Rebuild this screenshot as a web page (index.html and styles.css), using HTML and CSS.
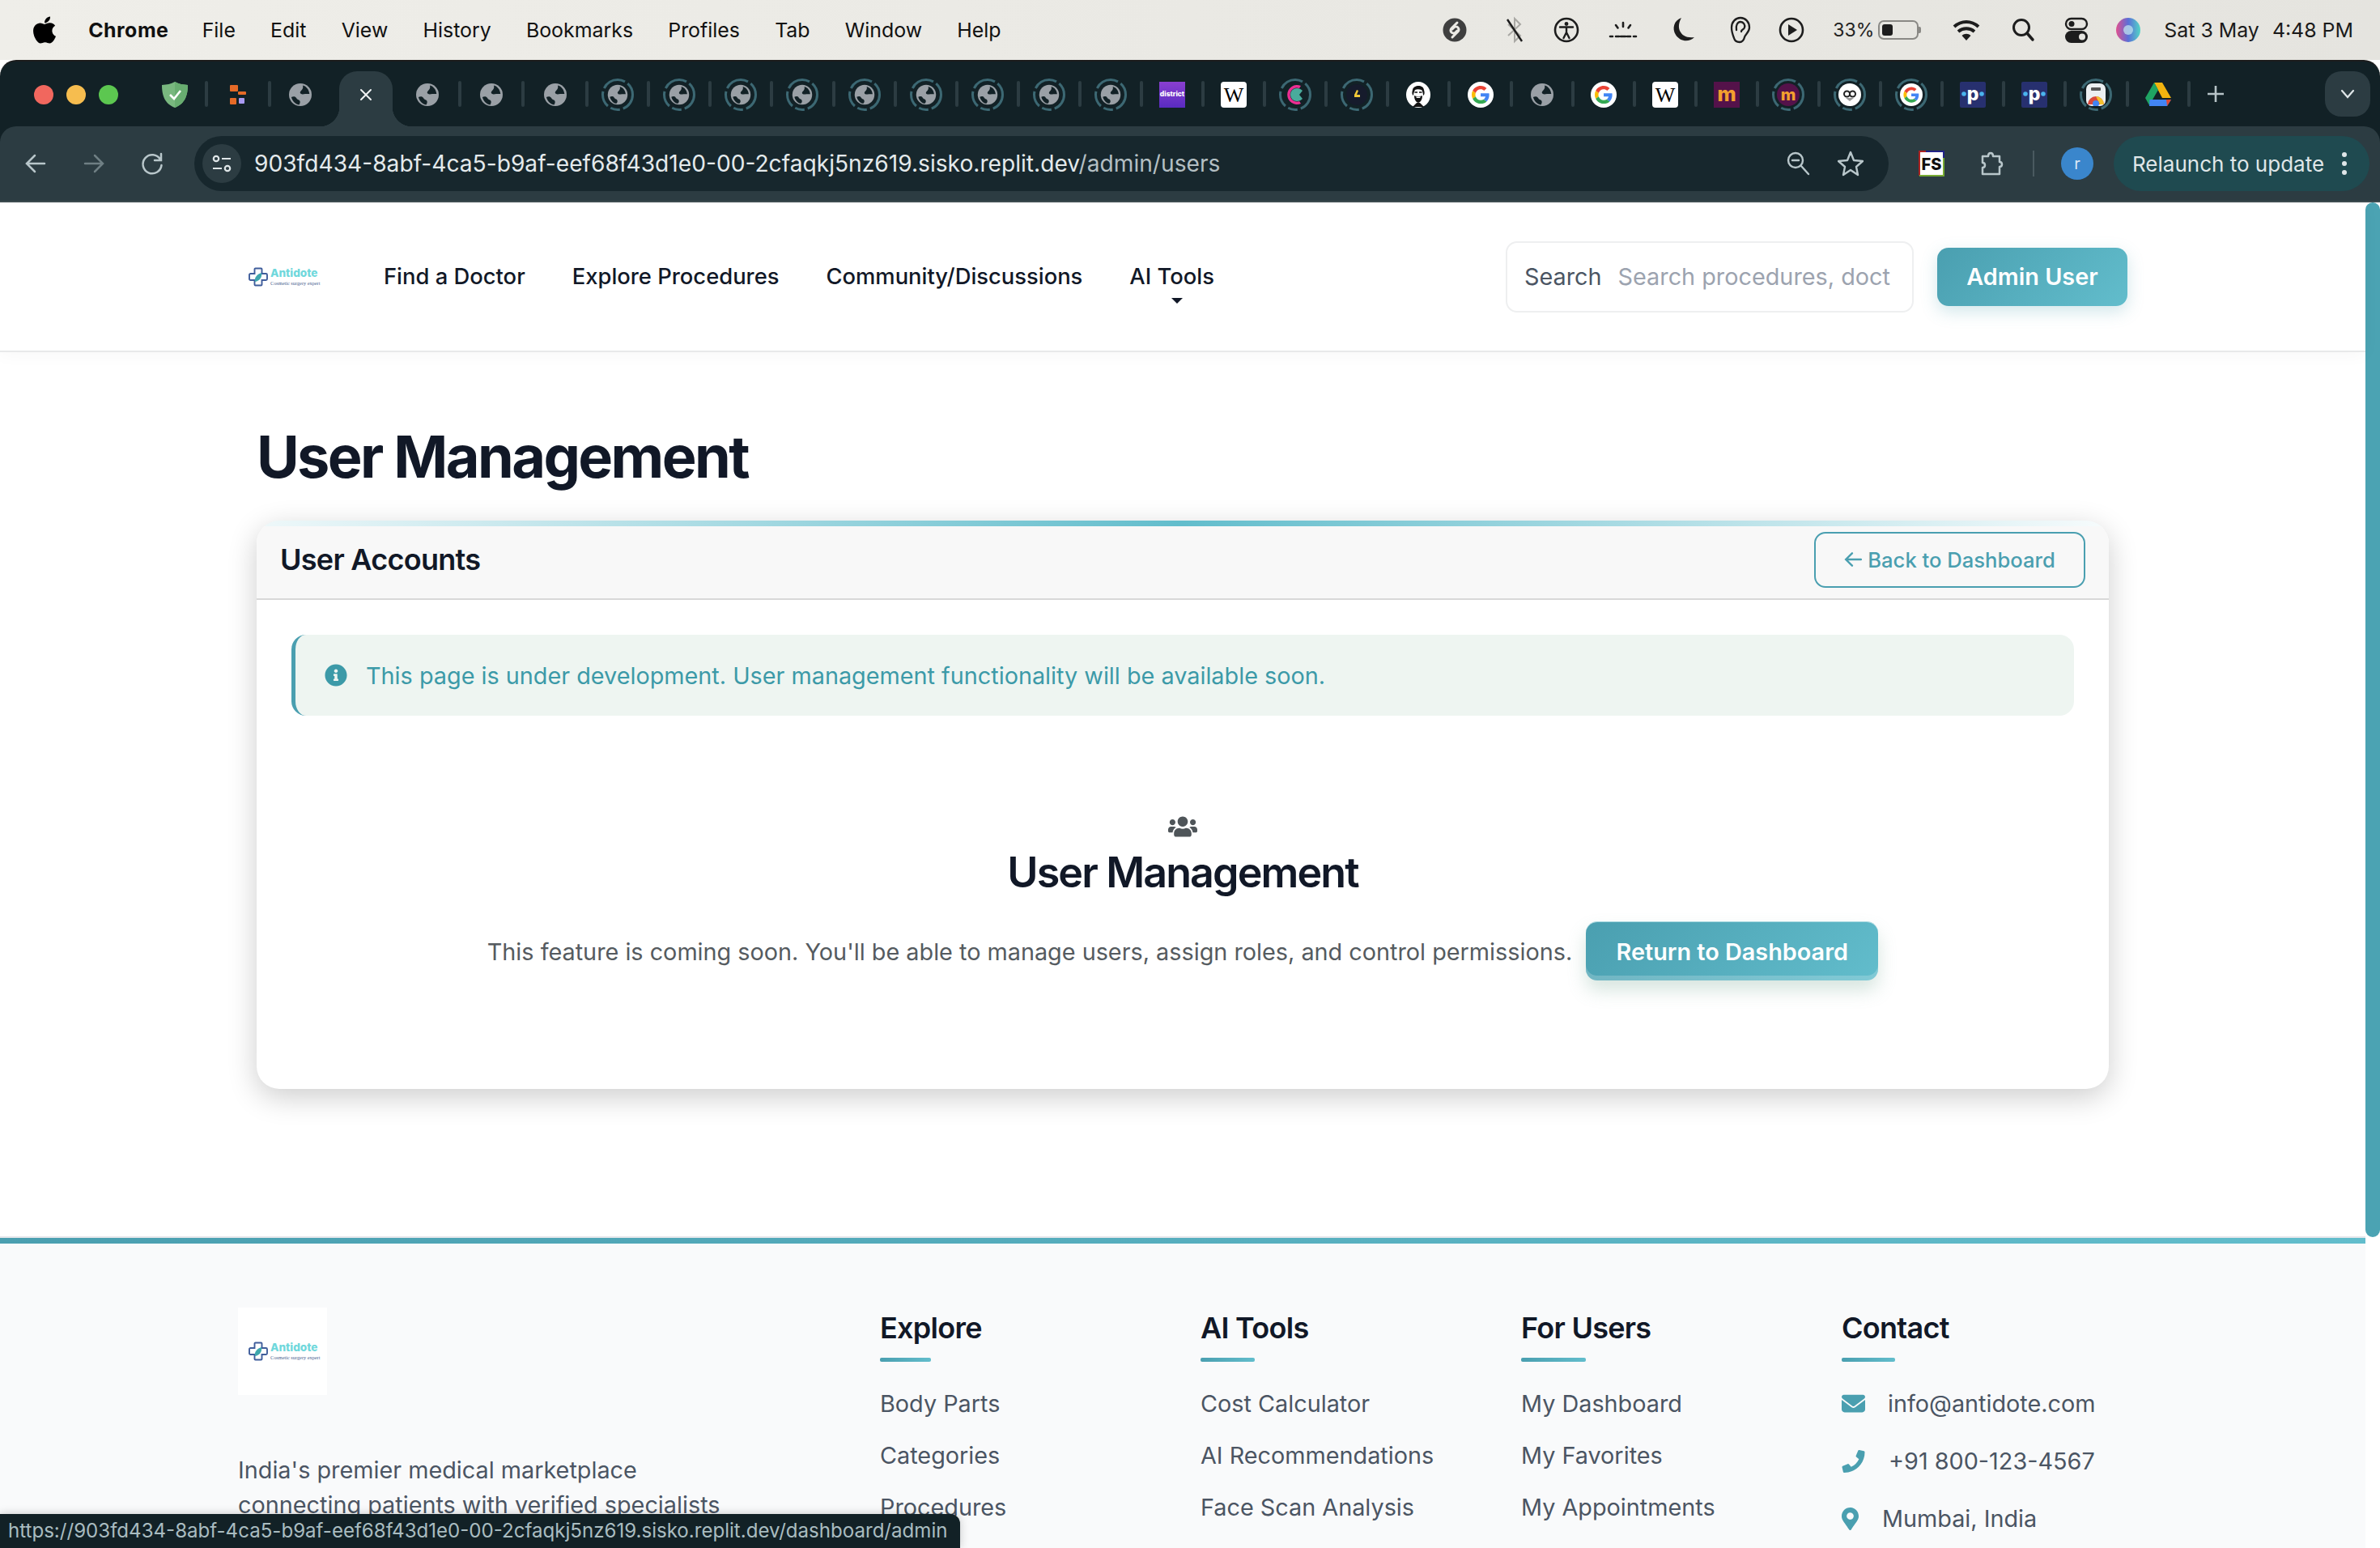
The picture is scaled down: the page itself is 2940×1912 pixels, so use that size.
FILE: index.html
```html
<!DOCTYPE html>
<html lang="en">
<head>
<meta charset="utf-8">
<title>User Management</title>
<link rel="stylesheet" href="styles.css">
</head>
<body>
<svg class="defs" width="0" height="0" aria-hidden="true">
  <defs>
    <symbol id="globe" viewBox="0 0 32 32"><circle cx="16" cy="16" r="14" fill="#9aa0a6"/><path fill="#122126" d="M19 4.600c4.600 1.200 7.600 5 8.300 10.400h-5.300c-2 0-3 1-5 0-2-1.100-1.200-3 0-4 2-1.800 2.800-3.800 2-6.400zM4.900 19c2-1 5-1.200 6.100 1 1 2 3 2 4 3 1.400 1.800.5 3.800-.6 5.400-4.400-.6-7.900-4-9.500-9.400z"/></symbol>
    <symbol id="ring" viewBox="0 0 40 40"><circle cx="20" cy="20" r="18.500" fill="none" stroke="#3c6873" stroke-width="3" stroke-dasharray="22 4 12 4 20 4 30 4 16 4"/></symbol>
    <symbol id="google" viewBox="0 0 32 32"><circle cx="16" cy="16" r="16" fill="#fff"/><g transform="translate(5 5) scale(.46)"><path fill="#EA4335" d="M24 9.500c3.540 0 6.710 1.220 9.210 3.600l6.850-6.850C35.900 2.380 30.470 0 24 0 14.620 0 6.510 5.380 2.560 13.220l7.980 6.190C12.430 13.720 17.740 9.500 24 9.500z"/><path fill="#4285F4" d="M46.980 24.550c0-1.570-.15-3.090-.38-4.550H24v9.020h12.940c-.58 2.960-2.260 5.480-4.780 7.180l7.730 6c4.510-4.180 7.090-10.360 7.090-17.650z"/><path fill="#FBBC05" d="M10.530 28.590c-.48-1.450-.76-2.990-.76-4.590s.27-3.140.76-4.590l-7.980-6.190C.92 16.460 0 20.120 0 24c0 3.880.92 7.540 2.560 10.780l7.970-6.190z"/><path fill="#34A853" d="M24 48c6.480 0 11.930-2.130 15.890-5.810l-7.730-6c-2.150 1.450-4.920 2.300-8.160 2.300-6.260 0-11.570-4.220-13.470-9.910l-7.980 6.190C6.510 42.620 14.620 48 24 48z"/></g></symbol>
    <symbol id="wiki" viewBox="0 0 32 32"><rect width="32" height="32" rx="4" fill="#fff"/><text x="16" y="25" text-anchor="middle" class="svg-serif" font-size="26" fill="#000">W</text></symbol>
    <symbol id="msq" viewBox="0 0 32 32"><rect width="32" height="32" fill="#54124a"/><text x="16" y="24" text-anchor="middle" class="svg-bold" font-size="25" fill="#f3a02e">m</text></symbol>
    <symbol id="mround" viewBox="0 0 32 32"><circle cx="16" cy="16" r="16" fill="#54124a"/><text x="16" y="24" text-anchor="middle" class="svg-bold" font-size="23" fill="#f3a02e">m</text></symbol>
    <symbol id="psq" viewBox="0 0 32 32"><rect width="32" height="32" rx="2" fill="#27306f"/><circle cx="5" cy="15" r="2.800" fill="#4ab4ee"/><circle cx="27" cy="15" r="2.800" fill="#4ab4ee"/><text x="16" y="23" text-anchor="middle" class="svg-bold" font-size="23" fill="#fff">p</text></symbol>
    <symbol id="mail" viewBox="0 0 512 512"><path d="M48 64C21.500 64 0 85.500 0 112c0 15.100 7.100 29.300 19.200 38.400L236.800 313.600c11.400 8.500 27 8.500 38.400 0L492.800 150.400c12.100-9.100 19.200-23.300 19.200-38.400c0-26.500-21.500-48-48-48H48zM0 176V384c0 35.300 28.700 64 64 64H448c35.300 0 64-28.700 64-64V176L294.400 339.200c-22.800 17.100-54 17.100-76.800 0L0 176z"/></symbol>
    <symbol id="logomark" viewBox="0 0 24 24"><path fill="none" stroke="#3f5d9b" stroke-width="1.900" d="M8.500 1.500h7a1 1 0 0 1 1 1v5.500h5a1.500 1.500 0 0 1 1.500 1.500v5a1.500 1.500 0 0 1-1.500 1.500h-5v5.500a1 1 0 0 1-1 1h-7a1 1 0 0 1-1-1V16h-5A1.500 1.500 0 0 1 1 14.500v-5A1.500 1.500 0 0 1 2.500 8h5V2.500a1 1 0 0 1 1-1z"/><path fill="#3ea7ad" d="M8 18c-1-5 2-9 8-11 1 5-2 10-8 11z"/></symbol>
  </defs>
</svg>

<div class="menubar">
  <div class="menu-left">
    <svg class="apple" viewBox="0 0 384 512"><path d="M318.700 268.700c-.2-36.700 16.400-64.400 50-84.800-18.800-26.900-47.200-41.700-84.700-44.600-35.500-2.800-74.300 20.700-88.500 20.700-15 0-49.400-19.700-76.400-19.700C63.300 141.200 4 184.800 4 273.500q0 39.300 14.400 81.200c12.800 36.700 59 126.700 107.200 125.200 25.200-.6 43-17.900 75.800-17.900 31.800 0 48.300 17.900 76.400 17.900 48.600-.7 90.400-82.500 102.600-119.300-65.200-30.700-61.700-90-61.700-91.900zm-56.600-164.200c27.300-32.400 24.800-61.900 24-72.500-24.100 1.400-52 16.400-67.900 34.900-17.500 19.800-27.800 44.300-25.600 71.900 26.100 2 49.900-11.400 69.500-34.300z"/></svg>
    <b class="menu-app">Chrome</b>
    <span>File</span><span>Edit</span><span>View</span><span>History</span><span>Bookmarks</span><span>Profiles</span><span>Tab</span><span>Window</span><span>Help</span>
  </div>
  <div class="menu-right">
    <svg class="mi mi-shazam" viewBox="0 0 40 40"><circle cx="20" cy="20" r="14.500" fill="#3f3f3f"/><path fill="none" stroke="#eceae5" stroke-width="3" stroke-linecap="round" d="M23 11l-7 7a3.500 3.500 0 0 0 5 5l2-2M17 29l7-7a3.500 3.500 0 0 0-5-5l-2 2"/></svg>
    <svg class="mi mi-bt" viewBox="0 0 40 40"><path fill="none" stroke="#a9a8a4" stroke-width="2" d="M12 13l15 14-7 7V6l7 7-15 14"/><path stroke="#1b1b1b" stroke-width="2.400" d="M11 7l18 27"/></svg>
    <svg class="mi mi-acc" viewBox="0 0 40 40"><circle cx="20" cy="20" r="14" fill="none" stroke="#1d1d1d" stroke-width="2.600"/><circle cx="20" cy="12.500" r="2.400" fill="#1d1d1d"/><path fill="none" stroke="#1d1d1d" stroke-width="2.400" stroke-linecap="round" d="M12 16.500h16M20 17v6l-3.500 7M20 23l3.500 7"/></svg>
    <svg class="mi mi-bright" viewBox="0 0 40 40"><g stroke="#1d1d1d" stroke-width="2.600" stroke-linecap="round"><path d="M20 11v5M11 14l2.500 3.500M29 14l-2.500 3.500M4 28h3M11 28h4M17 28h6M25 28h4M33 28h3"/></g></svg>
    <svg class="mi mi-moon" viewBox="0 0 40 40"><path fill="#1d1d1d" d="M17 5C8 8 5 18 10 26c5 8 16 10 23 3-10 1-15-2-18-8-2-5-1-11 2-16z"/></svg>
    <svg class="mi mi-ear" viewBox="0 0 40 40"><path fill="none" stroke="#1d1d1d" stroke-width="2.300" stroke-linecap="round" d="M12 30c-2-5-3-9-3-13C9 10 14 5 20 5s11 5 11 12c0 6-5 8-6 12-1 4-3 6-6 6-3 0-6-1-7-5zM15 20c-1-5 1-10 5-10 4 0 6 4 5 7-1 3-4 2-4 5"/></svg>
    <svg class="mi mi-play" viewBox="0 0 40 40"><circle cx="20" cy="20" r="14" fill="none" stroke="#1d1d1d" stroke-width="2.600"/><path fill="#1d1d1d" d="M16 13l11 7-11 7z"/></svg>
    <span class="batt-pct">33%</span>
    <div class="battery"><div class="battery-level"></div></div>
    <svg class="mi mi-wifi" viewBox="0 0 40 40"><path fill="none" stroke="#1d1d1d" stroke-width="4" d="M5 16c9-8 21-8 30 0M10 22c6-5 14-5 20 0"/><path fill="#1d1d1d" d="M14.500 27c3-3 8-3 11 0L20 33z"/></svg>
    <svg class="mi mi-search" viewBox="0 0 40 40"><circle cx="18" cy="17" r="9.500" fill="none" stroke="#1d1d1d" stroke-width="3"/><path stroke="#1d1d1d" stroke-width="3.500" stroke-linecap="round" d="M25 24l7 8"/></svg>
    <svg class="mi mi-cc" viewBox="0 0 40 40"><rect x="7" y="6" width="26" height="13" rx="6.500" fill="none" stroke="#1d1d1d" stroke-width="2.400"/><circle cx="14" cy="12.500" r="3.500" fill="#1d1d1d"/><rect x="6" y="21" width="28" height="15" rx="7.500" fill="#1d1d1d"/><circle cx="27" cy="28.500" r="4" fill="#e6e5e0"/></svg>
    <svg class="mi mi-siri" viewBox="0 0 40 40"><defs><linearGradient id="siriG" x1="0" y1="0" x2="1" y2="0"><stop offset="0" stop-color="#e0508f"/><stop offset=".5" stop-color="#5a6fd8"/><stop offset="1" stop-color="#52d6c6"/></linearGradient></defs><circle cx="20" cy="20" r="15" fill="url(#siriG)"/><circle cx="20" cy="20" r="6" fill="#bfe3ee" opacity=".75"/></svg>
    <div class="clock"><span>Sat 3 May</span><span>4:48 PM</span></div>
  </div>
</div>

<div class="browser">
  <div class="tabstrip">
    <i class="light light-r"></i><i class="light light-y"></i><i class="light light-g"></i>
    <div class="tabs">
      <div class="tab tab-wide"><svg class="fav" viewBox="0 0 32 32"><path fill="#79b87f" d="M16 0c5 3 10 3.500 16 4 0 12-3 23-16 28C3 27 0 16 0 4c6-.5 11-1 16-4z"/><path fill="#68ad70" d="M16 0c5 3 10 3.500 16 4 0 12-3 23-16 28z"/><path fill="none" stroke="#fff" stroke-width="2.600" d="M10 16l5 5 8-10"/></svg></div><i class="sep"></i>
      <div class="tab tab-wide"><svg class="fav" viewBox="0 0 32 32"><rect x="6" y="4" width="10" height="8" rx="1" fill="#e56a27"/><rect x="16" y="12" width="10" height="4" rx="1" fill="#e56a27"/><rect x="6" y="20" width="8" height="8" rx="1" fill="#e56a27"/><rect x="17" y="20" width="7" height="7" rx="1" fill="#a99af2"/></svg></div><i class="sep"></i>
      <div class="tab"><svg class="fav"><use href="#globe"/></svg></div>
      <div class="tab tab-active"><svg class="close" viewBox="0 0 16 16"><path stroke="#f0f3f4" stroke-width="2" stroke-linecap="round" d="M2 2l12 12M14 2L2 14"/></svg></div>
      <div class="tab tab-wider"><svg class="fav"><use href="#globe"/></svg></div><i class="sep"></i>
      <div class="tab tab-wider"><svg class="fav"><use href="#globe"/></svg></div><i class="sep"></i>
      <div class="tab tab-wider"><svg class="fav"><use href="#globe"/></svg></div><i class="sep"></i>
      <div class="tab"><span class="ringed"><svg class="ring"><use href="#ring"/></svg><svg class="fav-sm"><use href="#globe"/></svg></span></div><i class="sep"></i>
      <div class="tab"><span class="ringed"><svg class="ring"><use href="#ring"/></svg><svg class="fav-sm"><use href="#globe"/></svg></span></div><i class="sep"></i>
      <div class="tab"><span class="ringed"><svg class="ring"><use href="#ring"/></svg><svg class="fav-sm"><use href="#globe"/></svg></span></div><i class="sep"></i>
      <div class="tab"><span class="ringed"><svg class="ring"><use href="#ring"/></svg><svg class="fav-sm"><use href="#globe"/></svg></span></div><i class="sep"></i>
      <div class="tab"><span class="ringed"><svg class="ring"><use href="#ring"/></svg><svg class="fav-sm"><use href="#globe"/></svg></span></div><i class="sep"></i>
      <div class="tab"><span class="ringed"><svg class="ring"><use href="#ring"/></svg><svg class="fav-sm"><use href="#globe"/></svg></span></div><i class="sep"></i>
      <div class="tab"><span class="ringed"><svg class="ring"><use href="#ring"/></svg><svg class="fav-sm"><use href="#globe"/></svg></span></div><i class="sep"></i>
      <div class="tab"><span class="ringed"><svg class="ring"><use href="#ring"/></svg><svg class="fav-sm"><use href="#globe"/></svg></span></div><i class="sep"></i>
      <div class="tab"><span class="ringed"><svg class="ring"><use href="#ring"/></svg><svg class="fav-sm"><use href="#globe"/></svg></span></div><i class="sep"></i>
      <div class="tab"><svg class="fav" viewBox="0 0 32 32"><defs><linearGradient id="distG" x1="0" y1="0" x2="0" y2="1"><stop offset="0" stop-color="#8a3fd0"/><stop offset="1" stop-color="#5a2bc0"/></linearGradient></defs><rect width="32" height="32" fill="url(#distG)"/><text x="16" y="18" text-anchor="middle" class="svg-bold" font-size="8.500" fill="#fff">district</text></svg></div><i class="sep"></i>
      <div class="tab"><svg class="fav"><use href="#wiki"/></svg></div><i class="sep"></i>
      <div class="tab"><span class="ringed"><svg class="ring"><use href="#ring"/></svg><svg class="fav-sm" viewBox="0 0 28 28"><path fill="#ec2f93" d="M21 3A12 12 0 1 0 21 25l-2-3A8.500 8.500 0 1 1 19 6z"/><path fill="#49ab9c" d="M16 6c3 0 5 1 7 3l-4 5 4 5c-2 2-4 3-7 3a8 8 0 0 1 0-16z"/></svg></span></div><i class="sep"></i>
      <div class="tab"><span class="ringed"><svg class="ring"><use href="#ring"/></svg><svg class="fav-sm" viewBox="0 0 28 28"><circle cx="14" cy="14" r="13" fill="#161b2c"/><path fill="#f2c838" d="M14 8l2 1-2 5h4v3h-7v-3z"/></svg></span></div><i class="sep"></i>
      <div class="tab"><svg class="fav" viewBox="0 0 32 32"><ellipse cx="16" cy="16" rx="15" ry="16" fill="#fff"/><path fill="#111" d="M9 10c1-6 13-7 14 0 1 3 1 6-1 7 0-3-1-6-2-7-3-1-6-1-8 0-1 2-2 4-2 7-2-1-2-4-1-7z"/><path stroke="#111" stroke-width="1.500" d="M11.500 13h3.500M17 13h3.500"/><path fill="#111" d="M11 17c2 1.500 8 1.500 10 0 0 5-2 8-5 9-3-1-5-4-5-9z"/><path fill="#fff" d="M13 18.500h6l-1 1.500h-4z"/><path fill="#111" d="M9 31l5-5h4l5 5z"/></svg></div><i class="sep"></i>
      <div class="tab"><svg class="fav"><use href="#google"/></svg></div><i class="sep"></i>
      <div class="tab"><svg class="fav"><use href="#globe"/></svg></div><i class="sep"></i>
      <div class="tab"><svg class="fav"><use href="#google"/></svg></div><i class="sep"></i>
      <div class="tab"><svg class="fav"><use href="#wiki"/></svg></div><i class="sep"></i>
      <div class="tab"><svg class="fav"><use href="#msq"/></svg></div><i class="sep"></i>
      <div class="tab"><span class="ringed"><svg class="ring"><use href="#ring"/></svg><svg class="fav-sm"><use href="#mround"/></svg></span></div><i class="sep"></i>
      <div class="tab"><span class="ringed"><svg class="ring"><use href="#ring"/></svg><svg class="fav-sm" viewBox="0 0 28 28"><circle cx="14" cy="14" r="14" fill="#fff"/><circle cx="10.500" cy="13" r="3.500" fill="none" stroke="#222" stroke-width="2"/><circle cx="17.500" cy="13" r="3.500" fill="none" stroke="#222" stroke-width="2"/><path fill="#999" d="M9 18h10l-5 4z"/></svg></span></div><i class="sep"></i>
      <div class="tab"><span class="ringed"><svg class="ring"><use href="#ring"/></svg><svg class="fav-sm"><use href="#google"/></svg></span></div><i class="sep"></i>
      <div class="tab"><svg class="fav"><use href="#psq"/></svg></div><i class="sep"></i>
      <div class="tab"><svg class="fav"><use href="#psq"/></svg></div><i class="sep"></i>
      <div class="tab"><span class="ringed"><svg class="ring"><use href="#ring"/></svg><svg class="fav-sm" viewBox="0 0 28 28"><rect x="2" width="24" height="28" rx="7" fill="#eceff1"/><rect x="8" y="5" width="12" height="4" rx="1" fill="#555"/><path fill="#d9483b" d="M4 26a10 10 0 0 1 20 0z"/><path fill="#f2c12e" d="M14 16a10 10 0 0 1 10 10h-5z"/><circle cx="14" cy="25" r="4" fill="#4285f4"/></svg></span></div><i class="sep"></i>
      <div class="tab"><svg class="fav" viewBox="0 0 32 32"><path fill="#f2b30f" d="M11 1h10l11 19H21z"/><path fill="#1fa463" d="M11 1L0 20l5 9 11-19z"/><path fill="#4285f4" d="M5.500 22H32l-5 8H5z"/><path fill="#e2472f" d="M26 22h6l-5 8z"/></svg></div><i class="sep"></i>
      <svg class="newtab" viewBox="0 0 24 24"><path stroke="#b7c3c7" stroke-width="2.600" d="M12 2v20M2 12h20"/></svg>
    </div>
    <div class="tabsearch"><svg viewBox="0 0 20 20" class="chev"><path fill="none" stroke="#dfe6e8" stroke-width="2.200" stroke-linecap="round" d="M3 6l7 8 7-8"/></svg></div>
  </div>

  <div class="toolbar">
    <svg class="tb-ic" viewBox="0 0 32 32"><path fill="none" stroke="#b8c6ca" stroke-width="2.500" stroke-linecap="round" d="M27 16H6M15 6L5 16l10 10"/></svg>
    <svg class="tb-ic tb-gap" viewBox="0 0 32 32"><path fill="none" stroke="#6f7f84" stroke-width="2.500" stroke-linecap="round" d="M5 16h21M17 6l10 10-10 10"/></svg>
    <svg class="tb-ic tb-gap" viewBox="0 0 32 32"><path fill="none" stroke="#b8c6ca" stroke-width="2.500" stroke-linecap="round" d="M26 11a11.500 11.500 0 1 0 1.500 7M27 4v8h-8"/></svg>
    <div class="omnibox">
      <div class="tune"><svg viewBox="0 0 28 28" class="tune-ic"><g fill="none" stroke="#dfe6e8" stroke-width="2.200"><circle cx="7" cy="8" r="3.200"/><path d="M14 8h11M3 20h11"/><circle cx="21" cy="20" r="3.200"/></g></svg></div>
      <span class="url">903fd434-8abf-4ca5-b9af-eef68f43d1e0-00-2cfaqkj5nz619.sisko.replit.dev<span class="url-path">/admin/users</span></span>
      <svg class="tb-ic omni-zoom" viewBox="0 0 32 32"><g fill="none" stroke="#b8c6ca" stroke-width="2.400" stroke-linecap="round"><circle cx="13" cy="12" r="9"/><path d="M9 12h8M20 19l9 10"/></g></svg>
      <svg class="tb-ic omni-star" viewBox="0 0 32 32"><path fill="none" stroke="#b8c6ca" stroke-width="2.400" stroke-linejoin="round" d="M16 2l4 10 11 1-8 7 2 10-9-6-9 6 2-10-8-7 11-1z"/></svg>
    </div>
    <svg class="tb-ic tb-fs" viewBox="0 0 32 32"><rect x="1" y="1" width="30" height="30" fill="#fff"/><path fill="none" stroke="#a22" stroke-width="2" d="M1 31V1h8"/><path fill="none" stroke="#228" stroke-width="2" d="M9 1h22v8"/><path fill="none" stroke="#7a3" stroke-width="2" d="M1 31h30V9"/><text x="16" y="24" text-anchor="middle" class="svg-bold" font-size="20" fill="#111">FS</text></svg>
    <svg class="tb-ic tb-puzzle" viewBox="0 0 32 32"><path fill="none" stroke="#b8c6ca" stroke-width="2.500" stroke-linejoin="round" d="M5 7h7c0-3 1-4 3-4s3 1 3 4h8v7c2 0 3 1 3 3s-1 3-3 3v9H5v-8c2 0 3-1 3-3s-1-3-3-3z"/></svg>
    <i class="tb-sep"></i>
    <span class="avatar">r</span>
    <div class="relaunch"><span>Relaunch to update</span><svg class="dots" viewBox="0 0 8 32"><circle cx="4" cy="5" r="3" fill="#dfe6e8"/><circle cx="4" cy="16" r="3" fill="#dfe6e8"/><circle cx="4" cy="27" r="3" fill="#dfe6e8"/></svg></div>
  </div>
</div>

<div class="viewport">
  <div class="page">
    <header class="site-header">
      <a class="logo logo-head">
        <svg class="logo-mark"><use href="#logomark"/></svg>
        <span class="logo-text"><span class="logo-name">Antidote</span><span class="logo-sub">Cosmetic surgery expert</span></span>
      </a>
      <nav class="nav">
        <a>Find a Doctor</a>
        <a>Explore Procedures</a>
        <a>Community/Discussions</a>
        <a class="nav-caret">AI Tools</a>
      </nav>
      <div class="search"><span class="search-label">Search</span><span class="search-ph">Search procedures, doct</span></div>
      <a class="btn btn-admin">Admin User</a>
    </header>

    <main class="main">
      <h1 class="title">User Management</h1>
      <section class="card">
        <div class="card-bar"></div>
        <div class="card-head">
          <h2 class="card-title">User Accounts</h2>
          <a class="btn-back"><svg class="back-arrow" viewBox="0 0 20 20"><path fill="none" stroke="#4a9fb0" stroke-width="2.200" stroke-linecap="round" d="M19 10H2M9 3l-7 7 7 7"/></svg>Back to Dashboard</a>
        </div>
        <div class="card-body">
          <div class="alert">
            <svg class="alert-ic" viewBox="0 0 512 512"><path d="M256 8C119 8 8 119.100 8 256c0 137 111 248 248 248s248-111 248-248C504 119.100 393 8 256 8zm0 110c23.200 0 42 18.800 42 42s-18.800 42-42 42-42-18.800-42-42 18.800-42 42-42zm56 254c0 6.600-5.400 12-12 12h-88c-6.600 0-12-5.400-12-12v-24c0-6.600 5.400-12 12-12h12v-64h-12c-6.600 0-12-5.400-12-12v-24c0-6.600 5.400-12 12-12h64c6.600 0 12 5.400 12 12v100h12c6.600 0 12 5.400 12 12v24z"/></svg>
            <span>This page is under development. User management functionality will be available soon.</span>
          </div>
          <div class="empty">
            <svg class="empty-ic" viewBox="0 0 640 512"><path d="M96 224c35.300 0 64-28.700 64-64s-28.700-64-64-64-64 28.700-64 64 28.700 64 64 64zm448 0c35.300 0 64-28.700 64-64s-28.700-64-64-64-64 28.700-64 64 28.700 64 64 64zm32 32h-64c-17.600 0-33.500 7.100-45.100 18.600 40.300 22.100 68.900 62 75.100 109.400h66c17.700 0 32-14.300 32-32v-32c0-35.300-28.700-64-64-64zm-256 0c61.900 0 112-50.100 112-112S381.900 32 320 32 208 82.100 208 144s50.100 112 112 112zm76.800 32h-8.300c-20.800 10-43.900 16-68.500 16s-47.600-6-68.500-16h-8.300C179.600 288 128 339.600 128 403.200V432c0 26.500 21.500 48 48 48h288c26.500 0 48-21.500 48-48v-28.800c0-63.600-51.600-115.200-115.200-115.200zm-223.700-13.400C161.500 263.100 145.600 256 128 256H64c-35.300 0-64 28.700-64 64v32c0 17.700 14.300 32 32 32h65.900c6.300-47.400 34.900-87.300 75.200-109.400z"/></svg>
            <h3 class="empty-title">User Management</h3>
            <div class="empty-row">
              <p class="empty-text">This feature is coming soon. You'll be able to manage users, assign roles, and control permissions.</p>
              <a class="btn btn-return">Return to Dashboard</a>
            </div>
          </div>
        </div>
      </section>
    </main>

    <footer class="footer">
      <div class="footer-grid">
        <div class="footer-brand">
          <div class="footer-logo">
            <a class="logo">
              <svg class="logo-mark"><use href="#logomark"/></svg>
              <span class="logo-text"><span class="logo-name">Antidote</span><span class="logo-sub">Cosmetic surgery expert</span></span>
            </a>
          </div>
          <p class="footer-about">India's premier medical marketplace<br>connecting patients with verified specialists</p>
        </div>
        <div class="footer-col">
          <h4 class="footer-h">Explore</h4>
          <ul class="footer-links"><li>Body Parts</li><li>Categories</li><li>Procedures</li></ul>
        </div>
        <div class="footer-col">
          <h4 class="footer-h">AI Tools</h4>
          <ul class="footer-links"><li>Cost Calculator</li><li>AI Recommendations</li><li>Face Scan Analysis</li></ul>
        </div>
        <div class="footer-col">
          <h4 class="footer-h">For Users</h4>
          <ul class="footer-links"><li>My Dashboard</li><li>My Favorites</li><li>My Appointments</li></ul>
        </div>
        <div class="footer-col">
          <h4 class="footer-h">Contact</h4>
          <ul class="footer-contact">
            <li><svg class="ci ci-mail"><use href="#mail"/></svg>info@antidote.com</li>
            <li><svg class="ci ci-phone" viewBox="0 0 512 512"><path d="M497.390 361.800l-112-48a24 24 0 0 0-28 6.900l-49.600 60.600A370.660 370.660 0 0 1 130.600 204.110l60.600-49.600a23.940 23.940 0 0 0 6.900-28l-48-112A24.160 24.160 0 0 0 122.600.61l-104 24A24 24 0 0 0 0 48c0 256.500 207.900 464 464 464a24 24 0 0 0 23.400-18.600l24-104a24.290 24.290 0 0 0-14.010-27.600z" transform="matrix(-1 0 0 1 512 0)"/></svg>+91 800-123-4567</li>
            <li><svg class="ci ci-pin" viewBox="0 0 384 512"><path d="M172.268 501.670C26.970 291.031 0 269.413 0 192 0 85.961 85.961 0 192 0s192 85.961 192 192c0 77.413-26.970 99.031-172.268 309.670-9.535 13.774-29.930 13.773-39.464 0zM192 272c44.183 0 80-35.817 80-80s-35.817-80-80-80-80 35.817-80 80 35.817 80 80 80z"/></svg>Mumbai, India</li>
          </ul>
        </div>
      </div>
    </footer>
  </div>
  <div class="scrolltrack"><div class="scrollthumb"></div></div>
</div>

<div class="statusbar">https://903fd434-8abf-4ca5-b9af-eef68f43d1e0-00-2cfaqkj5nz619.sisko.replit.dev/dashboard/admin</div>
</body>
</html>
```
FILE: styles.css
```css
* { box-sizing: border-box; }
html, body { margin: 0; padding: 0; }
body {
  width: 2940px;
  height: 1912px;
  overflow: hidden;
  position: relative;
  background: #fff;
  font-family: Inter, "Liberation Sans", sans-serif;
  color: #111827;
}
a { color: inherit; text-decoration: none; }
i { display: block; }
ul { list-style: none; margin: 0; padding: 0; }
h1, h2, h3, h4, p { margin: 0; }
.defs { position: absolute; }
.svg-serif { font-family: "Liberation Serif", serif; }
.svg-bold { font-family: Inter, sans-serif; font-weight: 800; }

/* macOS menu bar */
.menubar {
  height: 74px;
  display: flex;
  align-items: center;
  justify-content: space-between;
  background: linear-gradient(90deg, #efeee9, #e5e4df);
  color: #111;
  font-size: 24.900px;
}
.menu-left { display: flex; align-items: center; gap: 43.200px; padding-left: 40px; }
.apple { width: 30px; height: 38px; margin-right: -4px; fill: #000; }
.menu-app { font-weight: 700; letter-spacing: .5px; margin-right: -2px; }
.menu-right { display: flex; align-items: center; padding-right: 33px; }
.mi { width: 40px; height: 40px; display: block; }
.mi-bt { margin-left: 34px; }
.mi-acc { margin-left: 24px; }
.mi-bright { margin-left: 30px; }
.mi-moon { margin-left: 35px; }
.mi-ear { margin-left: 30px; }
.mi-play { margin-left: 23px; }
.batt-pct { margin-left: 31px; font-size: 23px; color: #222; }
.battery { margin-left: 5px; width: 50px; height: 24px; border: 2px solid #8a8985; border-radius: 7px; padding: 3px; position: relative; margin-right: 3px; }
.battery::after { content: ""; position: absolute; right: -5px; top: 6px; width: 3px; height: 8px; background: #8a8985; border-radius: 0 2px 2px 0; }
.battery-level { width: 13px; height: 100%; background: #1d1d1d; border-radius: 3px; }
.mi-wifi { margin-left: 36px; }
.mi-search { margin-left: 30px; }
.mi-cc { margin-left: 26px; }
.mi-siri { margin-left: 24px; }
.clock { margin-left: 24px; display: flex; gap: 16px; color: #1a1a1a; }

/* Browser chrome */
.browser {
  height: 176px;
  background: #122126;
  border-top: 2px solid #1c1c1c;
  border-radius: 20px 20px 0 0;
  display: flex;
  flex-direction: column;
}
.tabstrip { height: 80px; display: flex; align-items: flex-end; position: relative; padding-left: 42px; padding-right: 12px; }
.light { width: 24px; height: 24px; border-radius: 50%; margin: 0 16px 27px 0; }
.light-r { background: #f1675e; }
.light-y { background: #f6bd4f; }
.light-g { background: #5cc750; }
.tabs { display: flex; align-items: flex-end; margin-left: 17px; }
.tab { width: 72.100px; height: 68px; padding-bottom: 10px; display: flex; align-items: center; justify-content: center; position: relative; }
.tab-wide { width: 74px; }
.tab-wider { width: 74.700px; }
.sep { width: 4px; height: 32px; margin-bottom: 24px; background: #2c3c42; border-radius: 2px; }
.fav { width: 32px; height: 32px; display: block; }
.ringed { width: 40px; height: 40px; position: relative; display: flex; align-items: center; justify-content: center; }
.ring { width: 40px; height: 40px; position: absolute; inset: 0; }
.fav-sm { width: 28px; height: 28px; display: block; }
.tab-active { width: 66px; margin: 0 6px 0 12px; background: #2c3c42; border-radius: 22px 22px 0 0; }
.tab-active::before, .tab-active::after {
  content: "";
  position: absolute;
  bottom: 0;
  width: 24px;
  height: 24px;
  background: radial-gradient(circle at 0 0, transparent 24px, #2c3c42 24.500px);
}
.tab-active::before { left: -24px; }
.tab-active::after { right: -24px; background: radial-gradient(circle at 100% 0, transparent 24px, #2c3c42 24.500px); }
.close { width: 16px; height: 16px; }
.newtab { width: 24px; height: 24px; margin: 0 0 28px 19px; }
.tabsearch { margin-left: auto; width: 56px; height: 56px; margin-bottom: 12px; background: #2c3c42; border-radius: 20px; display: flex; align-items: center; justify-content: center; }
.chev { width: 20px; height: 20px; }

.toolbar {
  height: 94px;
  background: #2c3c42;
  border-bottom: 2px solid #3d4b50;
  border-radius: 20px 20px 0 0;
  display: flex;
  align-items: center;
  padding-left: 28px;
}
.tb-ic { width: 32px; height: 32px; display: block; flex: none; }
.tb-gap { margin-left: 40px; }
.omnibox { margin-left: 36px; width: 2093px; height: 68px; background: #17272d; border-radius: 34px; display: flex; align-items: center; padding: 0 31px 0 10px; }
.tune { width: 48px; height: 48px; border-radius: 50%; background: #2c3c42; display: flex; align-items: center; justify-content: center; }
.tune-ic { width: 28px; height: 28px; }
.url { margin-left: 16px; font-size: 28.170px; color: #e4eaec; white-space: nowrap; }
.url-path { color: #b3bfc3; }
.omni-zoom { margin-left: auto; }
.omni-star { margin-left: 33px; }
.tb-fs { margin-left: 37px; }
.tb-puzzle { margin-left: 42px; }
.tb-sep { margin-left: 35px; width: 2px; height: 32px; background: #4a5a60; }
.avatar { margin-left: 33px; width: 40px; height: 40px; border-radius: 50%; background: #3a86cc; color: #dbe9f6; font-size: 20px; display: flex; align-items: center; justify-content: center; }
.relaunch { margin-left: 25px; width: 316px; height: 68px; border-radius: 34px; background: #1f4a50; color: #dfe6e8; font-size: 26px; display: flex; align-items: center; justify-content: space-between; padding: 0 27px 0 23px; white-space: nowrap; }
.dots { width: 8px; height: 32px; }

/* Page */
.viewport { height: 1662px; display: flex; overflow: hidden; }
.page { width: 2922px; flex: none; }
.scrolltrack { width: 18px; flex: none; }
.scrollthumb { height: 1278px; background: #4ba3b3; border-radius: 9px; }

.site-header {
  height: 185px;
  border-bottom: 2px solid #e8e9ea;
  box-shadow: 0 4px 20px rgba(0, 0, 0, .03);
  display: flex;
  align-items: center;
  padding: 0 294px;
  position: relative;
}
.logo { display: flex; align-items: center; gap: 3px; }
.logo-head { margin-left: 13px; }
.logo-mark { width: 24px; height: 24px; display: block; flex: none; }
.logo-text { display: flex; flex-direction: column; width: 60px; }
.logo-name { font-size: 13.600px; line-height: 15px; font-weight: 800; color: #6fd8dc; }
.logo-sub { font-family: "Liberation Serif", serif; font-size: 6.300px; line-height: 9px; color: #4a5f8f; white-space: nowrap; }
.nav { display: flex; gap: 58px; margin-left: 80px; font-size: 27.360px; line-height: 32px; padding-bottom: 1px; font-weight: 500; color: #111827; }
.nav-caret { position: relative; }
.nav-caret::after {
  content: "";
  position: absolute;
  left: 50%;
  bottom: -18px;
  margin-left: -1px;
  border: 7px solid transparent;
  border-top-color: #111827;
  border-bottom: 0;
}
.search {
  margin-left: auto;
  width: 504px;
  height: 88px;
  border: 2px solid #eeeff0;
  border-radius: 14px;
  padding: 0 24px 0 21px;
  display: flex;
  align-items: center;
  gap: 20px;
  font-size: 28.800px;
  white-space: nowrap;
}
.search-label { color: #4b5563; flex: none; }
.search-ph { color: #9ca3af; }
.btn {
  display: flex;
  align-items: center;
  justify-content: center;
  color: #fff;
  background: linear-gradient(135deg, #4a9fb0, #62bdcc);
  border-radius: 14px;
  font-size: 28.800px;
  font-weight: 600;
  white-space: nowrap;
}
.btn-admin { margin-left: 29px; width: 235px; height: 72px; box-shadow: 0 7px 20px rgba(74, 159, 176, .25); flex: none; }

.main { padding: 86px 317px 182px; }
.title { font-size: 72px; line-height: 86px; font-weight: 700; letter-spacing: -2.600px; margin-bottom: 36px; color: #111827; }
.card { height: 702px; background: #fff; border-radius: 28px; box-shadow: 0 10px 36px rgba(0, 0, 0, .2); overflow: hidden; }
.card-bar { height: 7px; background: linear-gradient(90deg, rgba(98, 189, 204, .1), #62bdcc 50%, rgba(98, 189, 204, .05)); }
.card-head { height: 91px; padding: 0 29px 7px; background: #f8f8f8; border-bottom: 2px solid #d8d8d8; display: flex; align-items: center; justify-content: space-between; }
.card-title { font-size: 36px; font-weight: 600; color: #111827; letter-spacing: -.72px; }
.btn-back { width: 335px; height: 69px; border: 2px solid #4a9fb0; border-radius: 14px; color: #4a9fb0; font-size: 25.600px; font-weight: 500; display: flex; align-items: center; justify-content: center; gap: 7px; }
.back-arrow { width: 22px; height: 22px; }
.card-body { padding: 43px 43px 0; }
.alert { height: 100px; background: #eef5f1; border-left: 5px solid #4a9fb0; border-radius: 18px; display: flex; align-items: center; gap: 23px; padding-left: 36px; color: #3c9aa8; font-size: 28.800px; }
.alert-ic { width: 28px; height: 28px; fill: #3c9aa8; flex: none; }
.empty { display: flex; flex-direction: column; align-items: center; padding-top: 122px; }
.empty-ic { width: 36px; height: 30px; fill: #4f5559; display: block; }
.empty-title { font-size: 52px; font-weight: 600; line-height: 62px; color: #111827; margin-top: 11px; letter-spacing: -1.900px; }
.empty-row { display: flex; align-items: center; gap: 17px; margin-top: 30px; }
.empty-text { font-size: 28.800px; color: #555b60; white-space: nowrap; }
.btn-return { width: 361px; height: 72px; box-shadow: 0 -1px 0 #a9d9e0, inset 0 -6px 0 rgba(255, 255, 255, .2), 0 12px 22px rgba(120, 170, 150, .3); }

.footer { border-top: 2px solid #e5e7eb; background: #f9fafb; position: relative; height: 400px; }
.footer::before { content: ""; display: block; height: 7px; background: linear-gradient(90deg, #4a9fb0, #62bdcc); }
.footer-grid { display: grid; grid-template-columns: 793px 396px 396px 396px 1fr; padding: 79px 294px 0; }
.footer-logo { width: 110px; height: 108px; background: #fff; display: flex; align-items: center; padding-left: 13px; }
.footer-about { margin-top: 71px; font-size: 28.800px; line-height: 43px; color: #4b5563; }
.footer-h { display: inline-block; font-size: 36px; line-height: 44px; font-weight: 600; color: #111827; padding-top: 3px; letter-spacing: -.72px; }
.footer-h::after { content: ""; display: block; width: 50%; height: 5px; margin-top: 15px; border-radius: 2px; background: linear-gradient(90deg, #4a9fb0, #62bdcc); }
.footer-links { margin-top: 30px; font-size: 28.800px; line-height: 43px; color: #4b5563; }
.footer-links li { margin-bottom: 21.200px; }
.footer-contact { margin-top: 30px; font-size: 28.800px; line-height: 43px; color: #4b5563; }
.footer-contact li { display: flex; align-items: center; margin-bottom: 28px; white-space: nowrap; }
.ci { fill: #4a9fb0; display: block; flex: none; }
.ci-mail { width: 29px; height: 29px; margin-right: 28px; }
.ci-phone { width: 29px; height: 28px; margin-right: 29px; }
.ci-pin { width: 21px; height: 28px; margin-right: 29px; }

.statusbar {
  position: absolute;
  left: 0;
  bottom: 0;
  width: 1186px;
  height: 42px;
  padding-left: 10px;
  background: #122126;
  color: #a9bcc0;
  font-size: 24.080px;
  line-height: 42px;
  border-radius: 0 12px 0 0;
  box-shadow: 0 0 12px rgba(0, 0, 0, .2);
  white-space: nowrap;
}
```
